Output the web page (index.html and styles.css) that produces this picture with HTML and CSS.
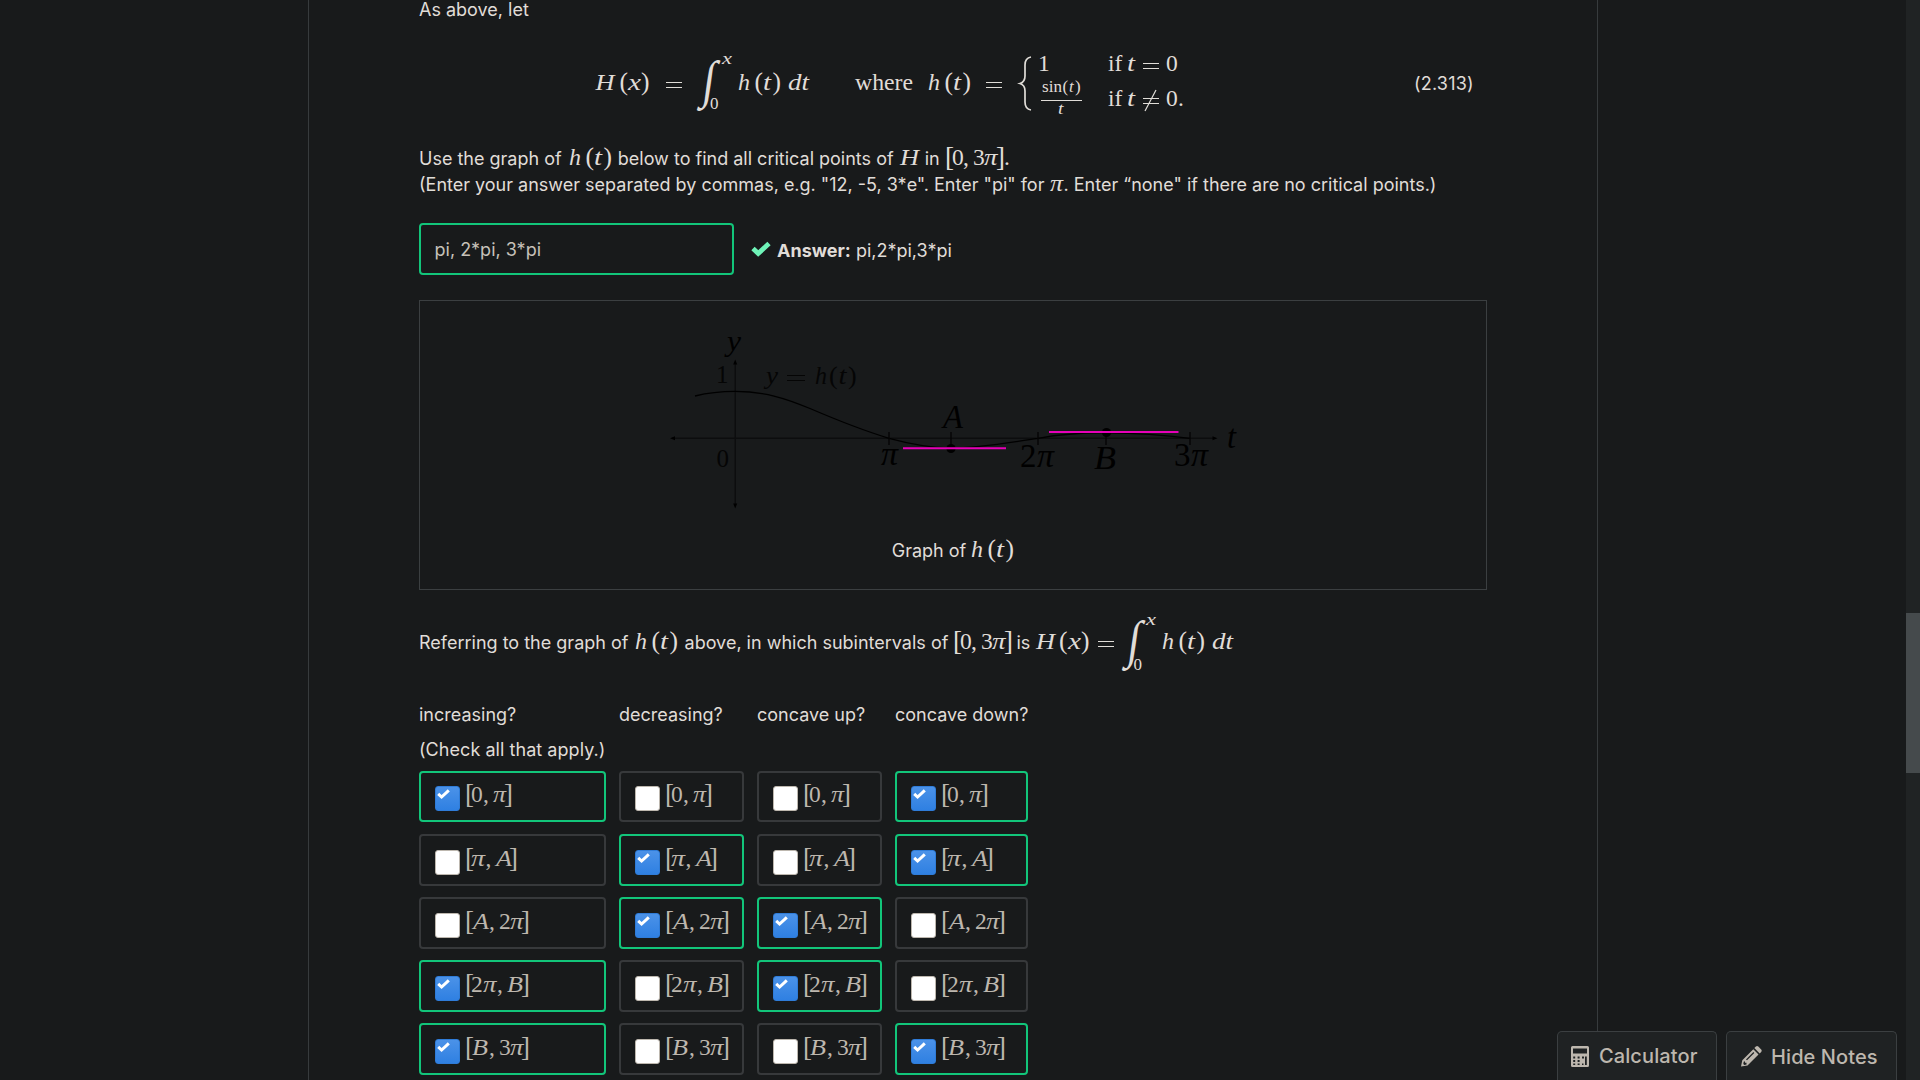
FILE: index.html
```
<!DOCTYPE html>
<html lang="en">
<head>
<meta charset="utf-8">
<title>Critical points of H</title>
<link rel="stylesheet" href="styles.css">
</head>
<body>
<svg class="defs" aria-hidden="true">
  <defs>
    <g id="ht"><text x="0" y="17" class="i" textLength="12" lengthAdjust="spacingAndGlyphs">h</text><text class="d" x="16.500 34.500" y="17">()</text><text class="i" x="25" y="17" textLength="8" lengthAdjust="spacingAndGlyphs">t</text></g>
    <g id="i03pi"><text class="b" x="-2 49" y="17.500">[]</text><text x="5 16 26" y="17">0,3</text><text class="i" x="37" y="17" textLength="13.500" lengthAdjust="spacingAndGlyphs">π</text></g>
    <g id="r1"><text class="b" x="-2 37" y="17.500">[]</text><text x="4 16" y="17">0,</text><text class="i" x="26" y="17" textLength="13" lengthAdjust="spacingAndGlyphs">π</text></g>
    <g id="r2"><text class="b" x="-2 42" y="17.500">[]</text><text class="i" x="4" y="17" textLength="14" lengthAdjust="spacingAndGlyphs">π</text><text x="18.500" y="17">,</text><text class="i" x="29" y="17" textLength="16" lengthAdjust="spacingAndGlyphs">A</text></g>
    <g id="r3"><text class="b" x="-2 54" y="17.500">[]</text><text class="i" x="6" y="17" textLength="16" lengthAdjust="spacingAndGlyphs">A</text><text x="22 32" y="17">,2</text><text class="i" x="43" y="17" textLength="13.500" lengthAdjust="spacingAndGlyphs">π</text></g>
    <g id="r4"><text class="b" x="-2 54" y="17.500">[]</text><text x="4 30" y="17">2,</text><text class="i" x="16" y="17" textLength="13.500" lengthAdjust="spacingAndGlyphs">π</text><text class="i" x="40" y="17" textLength="16" lengthAdjust="spacingAndGlyphs">B</text></g>
    <g id="r5"><text class="b" x="-2 54" y="17.500">[]</text><text class="i" x="5" y="17" textLength="16" lengthAdjust="spacingAndGlyphs">B</text><text x="22 32" y="17">,3</text><text class="i" x="43" y="17" textLength="13.500" lengthAdjust="spacingAndGlyphs">π</text></g>
    <path id="tick" d="M2.200 6.800 5.600 10 12.800 3.400" fill="none" stroke="#fff" stroke-width="3"/>
  </defs>
</svg>
<div class="page">
  <main class="content">
    <p class="lead">As above, let</p>

    <div class="equation">
      <svg class="math" viewBox="419 50 980 70" width="980" height="70">
        <text class="i" x="595.500" y="90" textLength="19" lengthAdjust="spacingAndGlyphs">H</text>
        <text class="d" x="619.500 641" y="90">()</text>
        <text class="i" x="628" y="90" textLength="13" lengthAdjust="spacingAndGlyphs">x</text>
        <path class="rule" d="M666 82.500h16M666 87.500h16"/>
        <text class="int" transform="translate(701 97) skewX(-8) scale(.85 1)">∫</text>
        <text class="i s" x="722" y="64" textLength="10" lengthAdjust="spacingAndGlyphs">x</text>
        <text class="s" x="710" y="108.500">0</text>
        <use href="#ht" x="738" y="72.500"/>
        <text class="i" x="788" y="89.500" textLength="21" lengthAdjust="spacingAndGlyphs">dt</text>
        <text x="855" y="89.500" textLength="58" lengthAdjust="spacingAndGlyphs">where</text>
        <use href="#ht" x="928" y="73"/>
        <path class="rule" d="M986 82.500h16M986 87.500h16"/>
        <path class="brace" d="M1031 57q-6 1-6 8v11q0 6-5 7.500q5 1.500 5 7.500v11q0 7 6 8"/>
        <text x="1038" y="71">1</text>
        <text x="1108" y="71">if</text>
        <text class="i" x="1127" y="71" textLength="8" lengthAdjust="spacingAndGlyphs">t</text>
        <path class="rule" d="M1143 63.500h16M1143 68.500h16"/>
        <text x="1166" y="71">0</text>
        <text class="s" x="1042" y="92" textLength="20" lengthAdjust="spacingAndGlyphs">sin</text>
        <text class="s" x="1062.500 1075" y="92">()</text>
        <text class="i s" x="1069" y="92">t</text>
        <path class="rule" d="M1041 100.500h41"/>
        <text class="i s" x="1058" y="114" textLength="5.500" lengthAdjust="spacingAndGlyphs">t</text>
        <text x="1108" y="106">if</text>
        <text class="i" x="1127" y="106" textLength="8" lengthAdjust="spacingAndGlyphs">t</text>
        <path class="rule" d="M1143 98.500h16M1143 103.500h16M1156 90 1145 111"/>
        <text x="1166 1178" y="106">0.</text>
      </svg>
      <span class="number">(2.313)</span>
    </div>

    <p class="question">Use the graph of <svg class="math inline fn" width="44" height="17"><use href="#ht"/></svg> below to find all critical points of <svg class="math inline var" width="20" height="17"><text class="i" y="17" textLength="19" lengthAdjust="spacingAndGlyphs">H</text></svg> in <svg class="math inline range" width="62" height="17"><use href="#i03pi"/><text x="57" y="17">.</text></svg><br>(Enter your answer separated by commas, e.g. "12, -5, 3*e". Enter "pi" for <svg class="math inline" width="14" height="17"><text class="i" y="17" textLength="13" lengthAdjust="spacingAndGlyphs">π</text></svg>. Enter “none" if there are no critical points.)</p>

    <div class="answer">
      <div class="field">pi, 2*pi, 3*pi</div>
      <svg class="correct" viewBox="0 0 20 16" width="20" height="16"><path d="M2 7.500 7.200 12.500 18 2.500" fill="none" stroke="#6ff3b8" stroke-width="4.800"/></svg>
      <span class="given"><b>Answer:</b> pi,2*pi,3*pi</span>
    </div>

    <figure class="graph">
      <svg class="plot" viewBox="640 310 620 220" width="620" height="220">
        <path d="M672 438.300H1215M735.200 362V506" stroke="#0c0d0e" stroke-width="1.400" fill="none"/>
        <path d="M670 438.300l5-2v4zM1217.500 438.300l-5-2v4zM735.200 359.500l-2 5h4zM735.200 508.500l-2-5h4z"/>
        <path d="M695 396C710 392.300 722 391.400 735 391.400C764 391.400 785 398 810 408.500C838 420.500 865 431 889 438.300C909 443.700 928 447.800 951 448C980 448 1005 443 1038 438.300C1062 434 1080 432.500 1106 432.800C1138 433 1165 435 1190 438.300" fill="none" stroke="#000" stroke-width="1.300"/>
        <path d="M889 432v13M1038 432v13M1190 432v13M951 432v16M1106 432v13" stroke="#050505" stroke-width="1.400"/>
        <circle cx="951" cy="448.500" r="4.600"/><circle cx="1106.500" cy="432.500" r="4.600"/>
        <path d="M903 448.300H1006M1049 432H1178.500" stroke="#e600b8" stroke-width="2"/>
        <g class="labels">
          <text class="i y" x="727" y="351" textLength="14" lengthAdjust="spacingAndGlyphs">y</text>
          <text class="n" x="716" y="383">1</text>
          <text class="n" x="716.500" y="466.500">0</text>
          <g class="m"><text class="i" x="766" y="384" textLength="12" lengthAdjust="spacingAndGlyphs">y</text>
          <path d="M787 375.500h18M787 380.500h18" stroke="#050505" stroke-width="1"/>
          <text class="i" x="815" y="384" textLength="12" lengthAdjust="spacingAndGlyphs">h</text>
          <text x="829 848" y="384">()</text>
          <text class="i" x="838.500" y="384" textLength="8" lengthAdjust="spacingAndGlyphs">t</text></g>
          <text class="i" x="943" y="428" textLength="20" lengthAdjust="spacingAndGlyphs">A</text>
          <text class="i" x="881" y="465" textLength="17" lengthAdjust="spacingAndGlyphs">π</text>
          <text x="1020" y="467">2</text>
          <text class="i" x="1037" y="467" textLength="17" lengthAdjust="spacingAndGlyphs">π</text>
          <text class="i" x="1094" y="469" textLength="22" lengthAdjust="spacingAndGlyphs">B</text>
          <text x="1174" y="466">3</text>
          <text class="i" x="1191" y="466" textLength="17" lengthAdjust="spacingAndGlyphs">π</text>
          <text class="i" x="1227" y="448" textLength="9" lengthAdjust="spacingAndGlyphs">t</text>
        </g>
      </svg>
      <figcaption>Graph of <svg class="math inline" width="43" height="17"><use href="#ht"/></svg></figcaption>
    </figure>

    <p class="subintervals">Referring to the graph of <svg class="math inline fn" width="44" height="17"><use href="#ht"/></svg> above, in which subintervals of <svg class="math inline range" width="56" height="17"><use href="#i03pi"/></svg> is <svg class="math inline" viewBox="1036 632 197 17" width="197" height="17">
        <text class="i" x="1037" y="649" textLength="19" lengthAdjust="spacingAndGlyphs">H</text>
        <text class="d" x="1060 1082" y="649">()</text>
        <text class="i" x="1069" y="649" textLength="13" lengthAdjust="spacingAndGlyphs">x</text>
        <path class="rule" d="M1099 641.500h16M1099 646.500h16"/>
        <text class="int" transform="translate(1127 656.500) skewX(-8) scale(.85 1)">∫</text>
        <text class="i s" x="1147" y="624.500" textLength="10" lengthAdjust="spacingAndGlyphs">x</text>
        <text class="s" x="1134.500" y="669.500">0</text>
        <use href="#ht" x="1163" y="632"/>
        <text class="i" x="1213" y="649" textLength="21" lengthAdjust="spacingAndGlyphs">dt</text>
      </svg></p>

    <div class="choices">
      <div class="col">
        <p>increasing?</p><p class="hint">(Check all that apply.)</p>
        <div class="opt ok"><i class="box on"><svg width="16" height="16"><use href="#tick"/></svg></i><svg class="math" width="62" height="17"><use href="#r1"/></svg></div>
        <div class="opt"><i class="box"></i><svg class="math" width="62" height="17"><use href="#r2"/></svg></div>
        <div class="opt"><i class="box"></i><svg class="math" width="62" height="17"><use href="#r3"/></svg></div>
        <div class="opt ok"><i class="box on"><svg width="16" height="16"><use href="#tick"/></svg></i><svg class="math" width="62" height="17"><use href="#r4"/></svg></div>
        <div class="opt ok"><i class="box on"><svg width="16" height="16"><use href="#tick"/></svg></i><svg class="math" width="62" height="17"><use href="#r5"/></svg></div>
      </div>
      <div class="col">
        <p>decreasing?</p><p></p>
        <div class="opt"><i class="box"></i><svg class="math" width="62" height="17"><use href="#r1"/></svg></div>
        <div class="opt ok"><i class="box on"><svg width="16" height="16"><use href="#tick"/></svg></i><svg class="math" width="62" height="17"><use href="#r2"/></svg></div>
        <div class="opt ok"><i class="box on"><svg width="16" height="16"><use href="#tick"/></svg></i><svg class="math" width="62" height="17"><use href="#r3"/></svg></div>
        <div class="opt"><i class="box"></i><svg class="math" width="62" height="17"><use href="#r4"/></svg></div>
        <div class="opt"><i class="box"></i><svg class="math" width="62" height="17"><use href="#r5"/></svg></div>
      </div>
      <div class="col">
        <p>concave up?</p><p></p>
        <div class="opt"><i class="box"></i><svg class="math" width="62" height="17"><use href="#r1"/></svg></div>
        <div class="opt"><i class="box"></i><svg class="math" width="62" height="17"><use href="#r2"/></svg></div>
        <div class="opt ok"><i class="box on"><svg width="16" height="16"><use href="#tick"/></svg></i><svg class="math" width="62" height="17"><use href="#r3"/></svg></div>
        <div class="opt ok"><i class="box on"><svg width="16" height="16"><use href="#tick"/></svg></i><svg class="math" width="62" height="17"><use href="#r4"/></svg></div>
        <div class="opt"><i class="box"></i><svg class="math" width="62" height="17"><use href="#r5"/></svg></div>
      </div>
      <div class="col">
        <p>concave down?</p><p></p>
        <div class="opt ok"><i class="box on"><svg width="16" height="16"><use href="#tick"/></svg></i><svg class="math" width="62" height="17"><use href="#r1"/></svg></div>
        <div class="opt ok"><i class="box on"><svg width="16" height="16"><use href="#tick"/></svg></i><svg class="math" width="62" height="17"><use href="#r2"/></svg></div>
        <div class="opt"><i class="box"></i><svg class="math" width="62" height="17"><use href="#r3"/></svg></div>
        <div class="opt"><i class="box"></i><svg class="math" width="62" height="17"><use href="#r4"/></svg></div>
        <div class="opt ok"><i class="box on"><svg width="16" height="16"><use href="#tick"/></svg></i><svg class="math" width="62" height="17"><use href="#r5"/></svg></div>
      </div>
    </div>
  </main>
</div>

<div class="tools">
  <div class="tool calc">
    <svg viewBox="0 0 18 21" width="18" height="21"><path fill="#bdb7ae" fill-rule="evenodd" d="M1.500 0h15Q18 0 18 1.500v18Q18 21 16.500 21h-15Q0 21 0 19.500v-18Q0 0 1.500 0zM2 2.500v5h14v-5zM2.200 10.500v2h2v-2zM6.600 10.500v2h2v-2zM11 10.500v2h2v-2zM2.200 14v2h2v-2zM6.600 14v2h2v-2zM2.200 17.500v1.500h2v-1.500zM6.600 17.500v1.500h2v-1.500zM11 17.500v1.500h1.500v-1.500zM14 10.500v8.500h1.800v-8.500z"/></svg>
    <span>Calculator</span>
  </div>
  <div class="tool notes">
    <svg viewBox="0 0 21 21" width="21" height="21"><path fill="#bdb7ae" fill-rule="evenodd" d="M1.300 14.200 12.300 3.200 17.500 8.400 6.500 19.400 0 20.500zM2.700 15.700 2.300 18 3.300 19 5.500 18.500V16.800H4v-1.500zM5 13.500 6 14.300 13.300 7 12.400 6z"/><path fill="#bdb7ae" d="m13.400 2.100 1.500-1.500q1.200-1 2.400 0l2.900 2.900q1 1.200 0 2.400l-1.500 1.500z"/></svg>
    <span>Hide Notes</span>
  </div>
</div>
<div class="scrollbar"><div class="thumb"></div></div>
</body>
</html>
```
FILE: styles.css
```
* { box-sizing: border-box; }
html, body { height: 100%; }
body {
  margin: 0;
  overflow: hidden;
  background: #181a1b;
  color: #e0ddd8;
  font: 18px/26px Inter, sans-serif;
}
p { margin: 0; }
.defs { position: absolute; width: 0; height: 0; }

.page {
  width: 1290px;
  height: 1080px;
  margin-left: 308px;
  padding-left: 110px;
  border: solid #373b3d;
  border-width: 0 1px;
  overflow: hidden;
}
.content { width: 1068px; margin-top: -3px; }
.lead { height: 26px; }

.math {
  font-family: "Liberation Serif", serif;
  font-size: 23.500px;
  fill: currentColor;
  overflow: visible;
}
text.i { font-style: italic; }
text.d { font-size: 25.500px; }
text.b { font-size: 27px; }
text.s { font-size: 17px; }
text.int { font-size: 52px; }
.math .rule { stroke: currentColor; stroke-width: 1.200; fill: none; }
.math .brace { stroke: currentColor; stroke-width: 1.700; fill: none; }
.inline { vertical-align: baseline; }
.fn { margin-left: 2px; }
.var { margin-left: 1px; }
.range { margin-left: 2px; }

.equation { display: flex; align-items: center; margin-top: 27px; height: 70px; }
.number { margin-left: 15px; line-height: 70px; padding-bottom: 2px; letter-spacing: .2px; }

.question { margin-top: 26px; height: 52px; }

.answer { display: flex; align-items: center; height: 52px; margin-top: 25px; }
.field {
  width: 315px;
  height: 52px;
  padding: 1px 13.500px 0;
  border: 2px solid #12c57a;
  border-radius: 4px;
  color: #c6c1b9;
  line-height: 48px;
}
.correct { margin: 0 6px 0 17px; }
.given { padding-top: 3px; }

.graph {
  display: flex;
  flex-direction: column;
  align-items: center;
  height: 290px;
  margin: 25px 0 0;
  padding-top: 9px;
  border: 1px solid #3b3f41;
}
.plot { flex: none; margin-left: -6px; font-family: "Liberation Serif", serif; }
.labels { font-size: 33px; fill: #000; }
.labels .n { font-size: 25px; fill: #050505; }
.labels .m { font-size: 26px; fill: #050505; }
.labels .y { font-size: 30px; }
figcaption { margin-top: 8px; }

.subintervals { height: 26px; margin-top: 40px; white-space: nowrap; }

.choices {
  display: grid;
  grid-template-columns: 187px 125px 125px 133px;
  column-gap: 13px;
  margin-top: 46px;
}
.col p { height: 35px; white-space: nowrap; }
.col p + p { height: 34px; }
.col .hint { letter-spacing: .05px; }
.opt {
  display: flex;
  align-items: flex-start;
  height: 52px;
  margin-bottom: 11px;
  padding: 14px 0 0 14px;
  border: 2px solid #37393b;
  border-radius: 4px;
  color: #bdb7ae;
}
.col p + .opt { height: 51px; margin-bottom: 12px; padding-top: 13px; }
.opt.ok { border-color: #12c57a; }
.opt .math { margin-top: -1px; }
.box {
  width: 25px;
  height: 25px;
  margin-right: 6.500px;
  border: 1px solid #bdb7ae;
  border-radius: 3px;
  background: #fff;
}
.box.on { border-color: #2f7cd8; background: linear-gradient(#4b92e8, #2f80e2); }
.box svg { display: block; margin: 0; }

.tools {
  position: absolute;
  right: 23px;
  bottom: 0;
  display: flex;
  gap: 9px;
  color: #bdb7ae;
  font-size: 20px;
  font-weight: 500;
}
.tool {
  display: flex;
  align-items: center;
  height: 49px;
  border: 1px solid #3b3f41;
  border-bottom: 0;
  border-radius: 5px 5px 0 0;
  background: #1f2223;
  white-space: nowrap;
}
.tool span { letter-spacing: .1px; }
.notes span { padding-top: 2px; }
.calc { width: 160px; padding-left: 13px; gap: 10px; }
.notes { width: 171px; padding-left: 14px; gap: 9px; }

.scrollbar {
  position: absolute;
  top: 0;
  right: 0;
  width: 14px;
  height: 1080px;
  padding-top: 613px;
  background: #202324;
}
.thumb { height: 160px; background: #454a4c; }
```
